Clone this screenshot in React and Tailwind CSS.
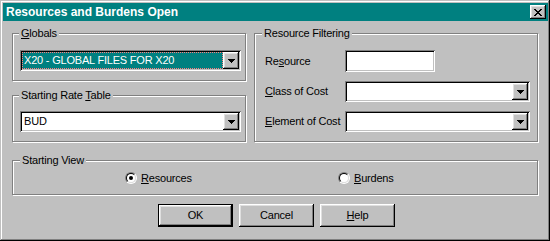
const raised =
  "shadow-[inset_-1px_-1px_0_#000,inset_1px_1px_0_#fff,inset_-2px_-2px_0_#808080,inset_2px_2px_0_#dfdfdf]";
const sunken =
  "shadow-[inset_1px_1px_0_#808080,inset_-1px_-1px_0_#fff,inset_2px_2px_0_#000,inset_-2px_-2px_0_#c0c0c0]";

function Arrow() {
  return (
    <svg width="7" height="4" viewBox="0 0 7 4" shapeRendering="crispEdges">
      <rect x="0" y="0" width="7" height="1" fill="#000" />
      <rect x="1" y="1" width="5" height="1" fill="#000" />
      <rect x="2" y="2" width="3" height="1" fill="#000" />
      <rect x="3" y="3" width="1" height="1" fill="#000" />
    </svg>
  );
}

function CloseGlyph() {
  const rows = [
    [0, 1, 6, 7],
    [1, 2, 5, 6],
    [2, 3, 4, 5],
    [3, 4],
    [2, 3, 4, 5],
    [1, 2, 5, 6],
    [0, 1, 6, 7],
  ];
  return (
    <svg width="8" height="7" viewBox="0 0 8 7" shapeRendering="crispEdges">
      {rows.map((cols, y) =>
        cols.map((x) => <rect key={`${x}-${y}`} x={x} y={y} width="1" height="1" fill="#000" />)
      )}
    </svg>
  );
}

function Combo({ value, selected, className }) {
  return (
    <div className={`flex h-[21px] p-[2px] bg-white ${sunken} ${className}`}>
      <div
        className={`flex-1 flex items-center pl-[2px] leading-[17px] whitespace-nowrap ${
          selected
            ? "bg-[#008080] text-white outline outline-1 outline-dotted outline-[#ff7f7f] -outline-offset-1"
            : "text-black"
        }`}
      >
        {value}
      </div>
      <div className={`w-[16px] h-[17px] bg-[#c0c0c0] flex items-center justify-center pt-[1px] ${raised}`}>
        <Arrow />
      </div>
    </div>
  );
}

function Group({ label, ml = "ml-[7px]", className = "", frameClass = "", children }) {
  return (
    <div className={`flex flex-col ${className}`}>
      <span className={`relative self-start ${ml} px-[2px] bg-[#c0c0c0] leading-[13px] -mb-[7px] whitespace-nowrap`}>
        {label}
      </span>
      <div
        className={`border border-[#808080] shadow-[1px_1px_0_#fff,inset_1px_1px_0_#fff] ${frameClass}`}
      >
        {children}
      </div>
    </div>
  );
}

function Radio({ checked, children }) {
  return (
    <div className="flex items-center gap-[4px]">
      <span className="w-[12px] h-[12px] rounded-full border border-t-[#808080] border-l-[#808080] border-r-white border-b-white">
        <span className="w-full h-full rounded-full border border-t-black border-l-black border-r-[#dfdfdf] border-b-[#dfdfdf] bg-white flex items-center justify-center">
          {checked && <span className="w-[4px] h-[4px] rounded-full bg-black" />}
        </span>
      </span>
      <span className="leading-[13px]">{children}</span>
    </div>
  );
}

function Button({ isDefault, children }) {
  return (
    <button
      className={`w-[75px] h-[23px] bg-[#c0c0c0] flex items-center justify-center leading-none ${raised} ${
        isDefault ? "border border-black" : ""
      }`}
    >
      {children}
    </button>
  );
}

export default function App() {
  return (
    <div className="w-[550px] h-[241px] bg-[#c0c0c0] pt-[3px] pl-[3px] pr-[2px] text-[11px] tracking-[-0.2px] text-black font-['Liberation_Sans',Arial,sans-serif] shadow-[inset_-1px_-1px_0_#000,inset_1px_1px_0_#c0c0c0,inset_-2px_-2px_0_#808080,inset_2px_2px_0_#fff] flex flex-col">
      <div className="h-[18px] bg-[#008080] flex items-center pl-[3px] pr-[2px]">
        <span className="text-white font-bold text-[12px] tracking-normal leading-none">
          Resources and Burdens Open
        </span>
        <div className={`ml-auto w-[16px] h-[14px] bg-[#c0c0c0] flex items-center justify-center ${raised}`}>
          <CloseGlyph />
        </div>
      </div>

      <div className="flex flex-col pl-[9px]">
        <div className="flex gap-[8px] mt-[6px]">
          <div className="w-[234px] flex flex-col">
            <Group
              label={
                <>
                  <u>G</u>lobals
                </>
              }
              frameClass="h-[48px] pt-[16px] pl-[7px]"
            >
              <Combo className="w-[221px]" value="X20 - GLOBAL FILES FOR X20" selected />
            </Group>
            <Group
              className="mt-[8px]"
              label={
                <>
                  Starting Rate <u>T</u>able
                </>
              }
              frameClass="h-[47px] pt-[15px] pl-[7px]"
            >
              <Combo className="w-[221px]" value="BUD" />
            </Group>
          </div>

          <Group
            className="w-[284px]"
            ml="ml-[8px]"
            label="Resource Filtering"
            frameClass="h-[109px] pt-[16px] pl-[10px] flex flex-col gap-[9px]"
          >
            <div className="flex items-center">
              <span className="w-[80px]">
                Re<u>s</u>ource
              </span>
              <div className={`w-[90px] h-[22px] bg-white ${sunken}`} />
            </div>
            <div className="flex items-center">
              <span className="w-[80px]">
                <u>C</u>lass of Cost
              </span>
              <Combo className="w-[185px]" value="" />
            </div>
            <div className="flex items-center">
              <span className="w-[80px] whitespace-nowrap">
                <u>E</u>lement of Cost
              </span>
              <Combo className="w-[185px]" value="" />
            </div>
          </Group>
        </div>

        <Group
          className="mt-[12px] w-[526px]"
          ml="ml-[8px]"
          label="Starting View"
          frameClass="h-[35px] pt-[9px] pl-[112px] flex"
        >
          <div className="w-[213px] h-[16px] flex items-center">
            <Radio checked>
              <u>R</u>esources
            </Radio>
          </div>
          <div className="h-[16px] flex items-center">
            <Radio>
              <u>B</u>urdens
            </Radio>
          </div>
        </Group>

        <div className="mt-[9px] flex gap-[6px] pl-[146px]">
          <Button isDefault>OK</Button>
          <Button>Cancel</Button>
          <Button>
            <span>
              <u>H</u>elp
            </span>
          </Button>
        </div>
      </div>
    </div>
  );
}
